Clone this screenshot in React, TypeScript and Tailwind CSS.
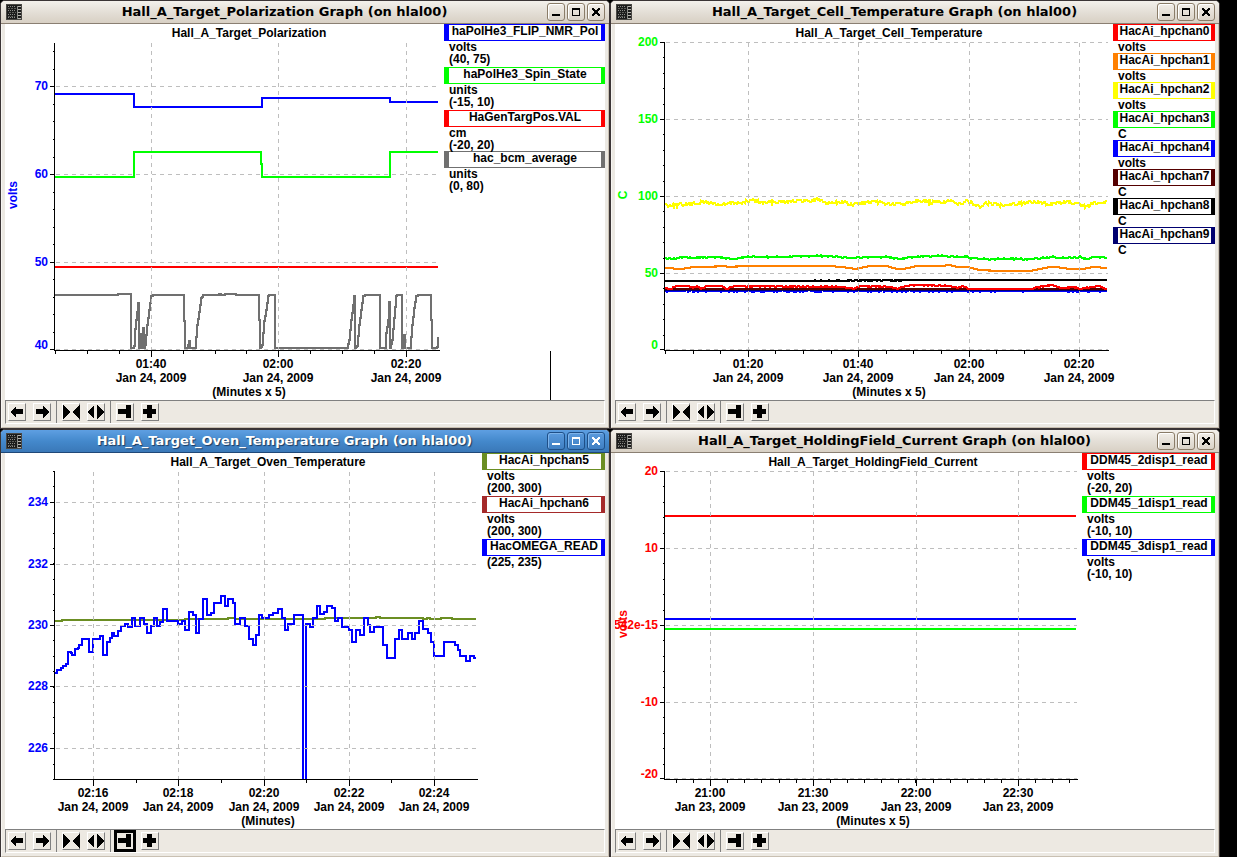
import { useId } from "react";
import clsx from "clsx";

type Point = [number, number];

type Series = { color: string; d: string };

type Tick = { at: number; label: string; textAt?: number };

type LegendItem = {
  name: string;
  color: string;
  lines: string[];
  tight?: boolean;
};

type Graph = {
  title: string;
  active?: boolean;
  width: number; // chart area, legend excluded
  right: number; // last x of the plot
  center: number;
  yUnit: string;
  yColor: string;
  yTicks: Tick[];
  yMinor: number[];
  xTicks: Tick[];
  xMinor: number[];
  date: string;
  xUnit: string;
  series: Series[];
  legend: LegendItem[];
  legendWidth: string;
  cursor?: number;
};

const TOP = 42;
const BOTTOM = 350;
const AXIS = 54;

const line = (points: Point[]) => "M" + points.map((p) => p.join(" ")).join("L");

const flat = (y: number, right: number) => `M55 ${y}H${right}`;

// holds each value until the next sample
const stairs = (points: Point[], right: number) =>
  `M${points[0][0]} ${points[0][1]}` +
  points.slice(1).map(([x, y]) => `H${x}V${y}`).join("") +
  `H${right}`;

// resamples a trend at every pixel and adds repeatable sensor noise
function sample(points: Point[], amp: number, seed: number) {
  const out: Point[] = [];
  let s = seed;
  for (let i = 0; i < points.length - 1; i++) {
    const [x0, y0] = points[i];
    const [x1, y1] = points[i + 1];
    for (let x = x0; x < x1; x++) {
      s = (s * 1103515245 + 12345) % 2147483648;
      const n = (s / 2147483648 - 0.5) * 2 * amp;
      out.push([x, Math.round(y0 + ((y1 - y0) * (x - x0)) / (x1 - x0) + n)]);
    }
  }
  out.push(points[points.length - 1]);
  return out;
}

const noisy = (points: Point[], amp: number, seed: number) => line(sample(points, amp, seed));

const range = (from: number, to: number, step: number) => {
  const out: number[] = [];
  for (let v = from; v <= to; v += step) out.push(Math.round(v));
  return out;
};

const beam: Point[] = [
  [55, 295], [117, 295], [118, 294], [130, 294], [131, 295], [131, 348], [133, 348], [134, 346], [135, 329], [136, 320],
  [137, 312], [138, 303], [139, 303], [139, 348], [141, 334], [142, 348], [143, 328], [144, 348], [145, 345], [147, 325],
  [149, 310], [151, 296], [153, 295], [184, 295], [184, 321], [185, 322], [185, 348], [187, 348], [189, 341], [190, 348],
  [195, 348], [197, 325], [199, 312], [201, 298], [203, 295], [218, 295], [219, 294], [222, 295], [226, 294], [235, 294],
  [236, 295], [259, 295], [259, 320], [260, 322], [260, 348], [262, 345], [264, 321], [266, 310], [268, 296], [269, 295],
  [275, 295], [275, 348], [347, 348], [349, 340], [351, 320], [353, 305], [354, 296], [355, 296], [355, 348], [357, 346],
  [359, 325], [361, 310], [363, 296], [365, 295], [380, 295], [380, 348], [385, 348], [386, 333], [388, 320], [389, 302],
  [390, 302], [390, 348], [392, 340], [394, 318], [396, 296], [397, 295], [402, 295], [402, 348], [404, 335], [405, 348],
  [410, 348], [412, 325], [414, 308], [416, 296], [418, 295], [431, 295], [431, 320], [432, 322], [432, 348], [436, 348],
  [438, 346], [438, 337],
];

const omegaBefore: Point[] = [
  [55, 244], [57, 241], [61, 239], [63, 237], [66, 235], [68, 223], [71, 224], [72, 226], [75, 220], [78, 219],
  [79, 216], [82, 210], [89, 223], [93, 210], [100, 207], [103, 226], [107, 213], [110, 209], [112, 204], [114, 207],
  [118, 202], [121, 197], [125, 195], [128, 198], [132, 189], [135, 197], [140, 189], [144, 195], [147, 204], [151, 197],
  [154, 189], [157, 197], [160, 193], [163, 180], [167, 192], [178, 195], [182, 192], [185, 201], [189, 183], [193, 186],
  [196, 204], [199, 190], [203, 170], [207, 186], [211, 184], [214, 174], [221, 167], [225, 177], [228, 170], [233, 174],
  [235, 195], [240, 189], [245, 197], [249, 210], [253, 216], [256, 206], [259, 186], [262, 189], [269, 186], [273, 184],
  [278, 180], [282, 189], [285, 201], [288, 195], [294, 186], [303, 350],
];

const omegaAfter: Point[] = [
  [306, 350], [306, 195], [310, 198], [313, 189], [317, 177], [320, 185], [324, 183], [327, 177], [332, 179], [335, 192],
  [338, 189], [342, 198], [349, 201], [352, 213], [356, 201], [360, 206], [364, 189], [368, 196], [370, 203], [374, 198],
  [383, 216], [387, 229], [395, 210], [399, 201], [402, 210], [408, 204], [412, 210], [415, 204], [419, 192], [423, 200],
  [428, 204], [431, 213], [434, 227], [444, 213], [455, 216], [458, 221], [460, 227], [466, 232], [470, 227], [474, 229],
];

const chan0: Point[] = [
  [55, 288], [60, 289], [67, 286], [78, 286], [83, 288], [87, 286], [91, 289], [97, 286], [112, 286], [116, 289],
  [125, 286], [233, 287], [243, 289], [250, 286], [280, 287], [288, 289], [295, 286], [307, 285], [340, 286], [347, 288],
  [353, 286], [359, 289], [420, 289], [430, 287], [443, 285], [450, 288], [463, 287], [470, 289], [480, 287], [490, 286],
  [495, 289], [497, 289],
];

const chan1: Point[] = [
  [55, 268], [70, 269], [85, 267], [100, 267], [112, 266], [121, 267], [133, 266], [217, 266], [233, 267], [245, 269],
  [260, 266], [277, 266], [287, 269], [293, 269], [307, 266], [330, 266], [340, 265], [347, 267], [357, 267], [370, 270],
  [390, 271], [420, 271], [440, 267], [447, 267], [460, 269], [473, 269], [483, 267], [497, 268],
];

const chan2: Point[] = [
  [55, 205], [67, 205], [80, 204], [97, 202], [110, 205], [123, 203], [133, 203], [142, 200], [153, 203], [163, 202],
  [183, 201], [200, 201], [207, 199], [217, 203], [233, 202], [241, 205], [253, 203], [267, 202], [280, 204], [293, 204],
  [300, 202], [310, 200], [320, 203], [340, 201], [347, 204], [357, 201], [370, 207], [377, 203], [390, 205], [403, 204],
  [423, 202], [440, 204], [457, 202], [477, 207], [483, 203], [497, 202],
];

const chan3: Point[] = [
  [55, 258], [62, 259], [75, 257], [83, 258], [107, 257], [122, 259], [135, 257], [173, 257], [187, 256], [217, 256],
  [240, 258], [267, 257], [277, 257], [290, 259], [303, 257], [317, 256], [333, 256], [357, 257], [360, 258], [377, 259],
  [400, 259], [423, 259], [443, 257], [453, 258], [470, 257], [475, 259], [487, 257], [497, 258],
];

const graphs: Graph[] = [
  {
    title: "Hall_A_Target_Polarization",
    width: 439,
    right: 438,
    center: 249,
    yUnit: "volts",
    yColor: "#0000ff",
    yTicks: [
      { at: 86, label: "70" },
      { at: 174, label: "60" },
      { at: 262, label: "50" },
      { at: 349, label: "40", textAt: 345 },
    ],
    yMinor: [51, 69, 104, 121, 139, 157, 192, 209, 227, 244, 279, 297, 314, 332],
    xTicks: [
      { at: 151, label: "01:40" },
      { at: 278, label: "02:00" },
      { at: 406, label: "02:20" },
    ],
    xMinor: [55, 87, 119, 183, 215, 246, 310, 342, 374],
    date: "Jan 24, 2009",
    xUnit: "(Minutes x 5)",
    series: [
      { color: "#707070", d: stairs(sample(beam, 0, 1), 438) },
      { color: "#ff0000", d: flat(267, 438) },
      { color: "#00ff00", d: "M55 177H134V152H261V164H262V177H390V152H438" },
      { color: "#0000ff", d: "M55 94H134V107H262V98H390V102H438" },
    ],
    legend: [
      { name: "haPolHe3_FLIP_NMR_Pol", color: "border-[#0000ff]", lines: ["volts", "(40, 75)"] },
      { name: "haPolHe3_Spin_State", color: "border-[#00ff00]", lines: ["units", "(-15, 10)"] },
      { name: "HaGenTargPos.VAL", color: "border-[#ff0000]", lines: ["cm", "(-20, 20)"], tight: true },
      { name: "hac_bcm_average", color: "border-[#707070]", lines: ["units", "(0, 80)"] },
    ],
    legendWidth: "w-[161px]",
    cursor: 550,
  },
  {
    title: "Hall_A_Target_Cell_Temperature",
    width: 498,
    right: 497,
    center: 279,
    yUnit: "C",
    yColor: "#00ff00",
    yTicks: [
      { at: 42, label: "200" },
      { at: 119, label: "150" },
      { at: 196, label: "100" },
      { at: 273, label: "50" },
      { at: 349, label: "0", textAt: 345 },
    ],
    yMinor: range(42, 349, 15.4),
    xTicks: [
      { at: 138, label: "01:20" },
      { at: 248, label: "01:40" },
      { at: 359, label: "02:00" },
      { at: 469, label: "02:20" },
    ],
    xMinor: range(55, 490, 27.6),
    date: "Jan 24, 2009",
    xUnit: "(Minutes x 5)",
    series: [
      { color: "#0000ff", d: noisy([[55, 291], [497, 291]], 0.7, 5) },
      { color: "#000070", d: flat(290, 497) },
      { color: "#000000", d: noisy([[55, 281], [200, 281], [300, 280], [497, 280]], 0.5, 9) },
      { color: "#550000", d: flat(289, 497) },
      { color: "#00ff00", d: noisy(chan3, 0.6, 3) },
      { color: "#ffff00", d: noisy(chan2, 1.6, 7) },
      { color: "#ff8000", d: noisy(chan1, 0.1, 2) },
      { color: "#ff0000", d: noisy(chan0, 0.5, 4) },
    ],
    legend: [
      { name: "HacAi_hpchan0", color: "border-[#ff0000]", lines: ["volts"] },
      { name: "HacAi_hpchan1", color: "border-[#ff8000]", lines: ["volts"] },
      { name: "HacAi_hpchan2", color: "border-[#ffff00]", lines: ["volts"] },
      { name: "HacAi_hpchan3", color: "border-[#00ff00]", lines: ["C"] },
      { name: "HacAi_hpchan4", color: "border-[#0000ff]", lines: ["volts"] },
      { name: "HacAi_hpchan7", color: "border-[#550000]", lines: ["C"] },
      { name: "HacAi_hpchan8", color: "border-black", lines: ["C"] },
      { name: "HacAi_hpchan9", color: "border-[#000070]", lines: ["C"] },
    ],
    legendWidth: "w-[102px]",
  },
  {
    title: "Hall_A_Target_Oven_Temperature",
    active: true,
    width: 477,
    right: 476,
    center: 268,
    yUnit: "",
    yColor: "#0000ff",
    yTicks: [
      { at: 73, label: "234" },
      { at: 135, label: "232" },
      { at: 196, label: "230" },
      { at: 257, label: "228" },
      { at: 319, label: "226" },
    ],
    yMinor: range(42, 350, 15.4),
    xTicks: [
      { at: 93, label: "02:16" },
      { at: 178, label: "02:18" },
      { at: 264, label: "02:20" },
      { at: 349, label: "02:22" },
      { at: 434, label: "02:24" },
    ],
    xMinor: [136, 221, 306, 391],
    date: "Jan 24, 2009",
    xUnit: "(Minutes)",
    series: [
      {
        color: "#6b8e23",
        d: "M55 192H62V191H185V190H228V189H235V190H325V189H376V188H380V189H423V190H427V189H430V190H441V189H452V190H476",
      },
      { color: "#0000ff", d: stairs(omegaBefore, 303) + stairs(omegaAfter, 476) },
    ],
    legend: [
      { name: "HacAi_hpchan5", color: "border-[#6b8e23]", lines: ["volts", "(200, 300)"] },
      { name: "HacAi_hpchan6", color: "border-[#a52a2a]", lines: ["volts", "(200, 300)"] },
      { name: "HacOMEGA_READ", color: "border-[#0000ff]", lines: ["(225, 235)"] },
    ],
    legendWidth: "w-[123px]",
  },
  {
    title: "Hall_A_Target_HoldingField_Current",
    width: 467,
    right: 466,
    center: 263,
    yUnit: "volts",
    yColor: "#ff0000",
    yTicks: [
      { at: 42, label: "20" },
      { at: 119, label: "10" },
      { at: 196, label: "7.10542e-15" },
      { at: 273, label: "-10" },
      { at: 349, label: "-20", textAt: 345 },
    ],
    yMinor: range(42, 349, 15.4),
    xTicks: [
      { at: 100, label: "21:00" },
      { at: 203, label: "21:30" },
      { at: 306, label: "22:00" },
      { at: 408, label: "22:30" },
    ],
    xMinor: range(66, 466, 17.1),
    date: "Jan 23, 2009",
    xUnit: "(Minutes x 5)",
    series: [
      { color: "#ff0000", d: flat(87, 466) },
      { color: "#0000ff", d: flat(190, 466) },
      { color: "#00ff00", d: flat(200, 466) },
    ],
    legend: [
      { name: "DDM45_2disp1_read", color: "border-[#ff0000]", lines: ["volts", "(-20, 20)"] },
      { name: "DDM45_1disp1_read", color: "border-[#00ff00]", lines: ["volts", "(-10, 10)"] },
      { name: "DDM45_3disp1_read", color: "border-[#0000ff]", lines: ["volts", "(-10, 10)"] },
    ],
    legendWidth: "w-[133px]",
  },
];

function Chart({ graph }: { graph: Graph }) {
  const clip = useId();
  const { right, center } = graph;
  return (
    <svg
      viewBox={`5 24 ${graph.width} 376`}
      role="img"
      aria-label={graph.title}
      className="block h-auto min-w-0 flex-1 overflow-visible font-['Liberation_Sans',Arial,sans-serif] text-[12px] font-bold"
    >
      {/* long axis labels are cut off at the window edge */}
      <clipPath id={clip}>
        <path d="M5 24H100V400H5Z" />
      </clipPath>
      <g fill="none" strokeWidth="2" shapeRendering="crispEdges">
        {graph.series.map((s) => (
          <path key={s.color} d={s.d} stroke={s.color} />
        ))}
      </g>
      <g transform="translate(0.5 0.5)" fill="none" shapeRendering="crispEdges">
        <g stroke="#bebebe" strokeDasharray="4 4">
          {graph.yTicks.map((t) => (
            <path key={t.at} d={`M55 ${t.at}H${right}`} />
          ))}
          {graph.xTicks.map((t) => (
            <path key={t.at} d={`M${t.at} ${TOP}V${BOTTOM}`} />
          ))}
        </g>
        <g stroke="#000">
          <path d={`M${AXIS} ${TOP}V${BOTTOM}H${right + 1}`} />
          <path d={graph.yTicks.map((t) => `M49 ${t.at}H${AXIS}`).join("")} />
          <path d={graph.yMinor.map((y) => `M52 ${y}H${AXIS}`).join("")} />
          <path d={graph.xTicks.map((t) => `M${t.at} ${BOTTOM}v6`).join("")} />
          <path d={graph.xMinor.map((x) => `M${x} ${BOTTOM}v3`).join("")} />
          {graph.cursor && <path d={`M${graph.cursor} ${BOTTOM}V400`} />}
        </g>
      </g>
      <text x={center} y="37" textAnchor="middle">
        {graph.title}
      </text>
      <g fill={graph.yColor} textAnchor="end" clipPath={`url(#${clip})`}>
        {graph.yTicks.map((t) => (
          <text key={t.at} x="48" y={(t.textAt ?? t.at) + 4}>
            {t.label}
          </text>
        ))}
      </g>
      {graph.yUnit && (
        <text transform="translate(17 195) rotate(-90)" fill={graph.yColor} textAnchor="middle">
          {graph.yUnit}
        </text>
      )}
      <g textAnchor="middle">
        {graph.xTicks.map((t) => (
          <g key={t.at}>
            <text x={t.at} y="368">
              {t.label}
            </text>
            <text x={t.at} y="382">
              {graph.date}
            </text>
          </g>
        ))}
        <text x={center} y="396">
          {graph.xUnit}
        </text>
      </g>
    </svg>
  );
}

function Legend({ items, width }: { items: LegendItem[]; width: string }) {
  return (
    <ul className={clsx("shrink-0 text-[12px] leading-[12px] font-bold whitespace-nowrap", width)}>
      {items.map((item) => (
        <li key={item.name} className={clsx(item.lines.length > 1 && !item.tight && "pb-0.5")}>
          <div className={clsx("flex h-[17px] justify-center border-y border-r-4 border-l-5 bg-white", item.color)}>
            {item.name}
          </div>
          {item.lines.map((text) => (
            <p key={text} className="pl-[5px]">
              {text}
            </p>
          ))}
        </li>
      ))}
    </ul>
  );
}

const tools = [
  [
    { label: "Scroll left", d: "M2 9L8 3V6H15V11H8V15Z" },
    { label: "Scroll right", d: "M16 9L10 3V6H3V11H10V15Z" },
  ],
  [
    { label: "Zoom in", d: "M1 2L8 9L1 16ZM18 2L10 9L18 16Z" },
    { label: "Zoom out", d: "M1 9L7 2V16ZM17 9L10 2V16Z" },
  ],
  [
    { label: "Go to end", d: "M2 6H10V2H15V15H10V11H2Z" },
    { label: "Add", d: "M2 6H6V2H11V6H15V11H11V15H6V11H2Z" },
  ],
];

function Toolbar({ active }: { active?: boolean }) {
  return (
    <div className="flex h-6 border border-t-[#808080] border-r-white border-b-white border-l-[#808080] bg-[#ede9e2]">
      {tools.map((group, i) => (
        <div
          key={group[0].label}
          className={clsx(
            "flex gap-[7px] pt-0.5 pr-[5px]",
            i === 0 ? "pl-0.5" : "pl-[5px]",
            i < 2 && "border-r border-[#808080]",
          )}
        >
          {group.map((tool) => (
            <button
              key={tool.label}
              type="button"
              aria-label={tool.label}
              className={clsx(
                "size-[18px] border border-t-white border-r-[#808080] border-b-[#808080] border-l-white",
                active && tool.label === "Go to end" && "outline-3 -outline-offset-1 outline-black",
              )}
            >
              <svg viewBox="1 1 16 16" className="block size-4 overflow-visible" shapeRendering="crispEdges">
                <path d={tool.d} />
              </svg>
            </button>
          ))}
        </div>
      ))}
    </div>
  );
}

function AppIcon() {
  return (
    <svg viewBox="0 0 16 16" className="size-4 shrink-0" shapeRendering="crispEdges" aria-hidden="true">
      <path d="M0 0H16V16H0Z" fill="#4a4844" />
      <path d="M1 1H15V15H1Z" fill="#1c1c1c" />
      <g fill="none" stroke="#8c8c88">
        <path d="M2 2.5H10M2 6.5H10M2 10.5H10M2 13.5H10" strokeDasharray="1 1" />
        <path d="M2 4.5H10M3 8.5H10M2 12.5H9" strokeDasharray="2 1" stroke="#5c5c58" />
        <path d="M11 2.5H15M11 5.5H15M11 8.5H15M11 11.5H15M11 14.5H15" stroke="#b4b2ac" />
        <path d="M11.5 2V15" stroke="#8c8c88" />
      </g>
    </svg>
  );
}

const controls = [
  { label: "Minimize", d: "M4 10H12V12H4Z" },
  { label: "Maximize", d: "M4 4H12V12H4ZM5 6V11H11V6Z" },
  { label: "Close", d: "M4 4H6V5H7V6H9V5H10V4H12V6H11V7H10V9H11V10H12V12H10V11H9V10H7V11H6V12H4V10H5V9H6V7H5V6H4Z" },
];

function TitleBar({ title, active }: { title: string; active?: boolean }) {
  return (
    <header
      className={clsx(
        "flex h-[23px] items-center rounded-t-[4px] border-b pr-1 pl-[5px]",
        active
          ? "border-[#1f4878] bg-linear-to-b from-[#5e9fe2] via-[#4489cc] to-[#3a78b8] text-white"
          : "border-[#8a7f72] bg-linear-to-b from-[#f4f1ec] via-[#e4dfd7] to-[#d8d0c4] text-black",
      )}
    >
      <AppIcon />
      <h1
        className={clsx(
          "min-w-0 flex-1 truncate text-center font-['DejaVu_Sans',Verdana,sans-serif] text-[13px] leading-5 font-bold",
          active && "[text-shadow:1px_1px_1px_#1c3a5e]",
        )}
      >
        {title} Graph (on hlal00)
      </h1>
      <div className="flex gap-0.5">
        {controls.map((c) => (
          <button
            key={c.label}
            type="button"
            aria-label={c.label}
            className={clsx(
              "flex size-[18px] rounded-[3px] border",
              active
                ? "border-[#1f4f87] bg-linear-to-b from-[#5a9add] to-[#3f7fc2] shadow-[inset_1px_1px_0_#7db3ea]"
                : "border-[#8a7c68] bg-linear-to-b from-[#f2eee8] to-[#dad3c8] shadow-[inset_1px_1px_0_#fff]",
            )}
          >
            <svg viewBox="0 0 16 16" className="block size-4" shapeRendering="crispEdges">
              <path d={c.d} fill="currentColor" fillRule="evenodd" />
            </svg>
          </button>
        ))}
      </div>
    </header>
  );
}

function GraphWindow({ graph }: { graph: Graph }) {
  return (
    <section className="flex flex-col rounded-t-[5px] border border-[#3b3536] bg-[#ece9e3]">
      <TitleBar title={graph.title} active={graph.active} />
      <div className="flex flex-1 flex-col border-r border-b border-l border-r-[#c9c0b2] border-b-[#c9c0b2] border-l-[#f7f5f2] px-[3px] pb-[3px]">
        <div className="flex flex-1 items-start bg-white">
          <Chart graph={graph} />
          <Legend items={graph.legend} width={graph.legendWidth} />
        </div>
        <Toolbar active={graph.active} />
      </div>
    </section>
  );
}

export default function App() {
  return (
    <main className="h-screen overflow-hidden bg-black font-['Liberation_Sans',Arial,sans-serif] text-black">
      <div className="grid grid-cols-2 pr-[17px]">
        {graphs.map((graph) => (
          <GraphWindow key={graph.title} graph={graph} />
        ))}
      </div>
    </main>
  );
}
